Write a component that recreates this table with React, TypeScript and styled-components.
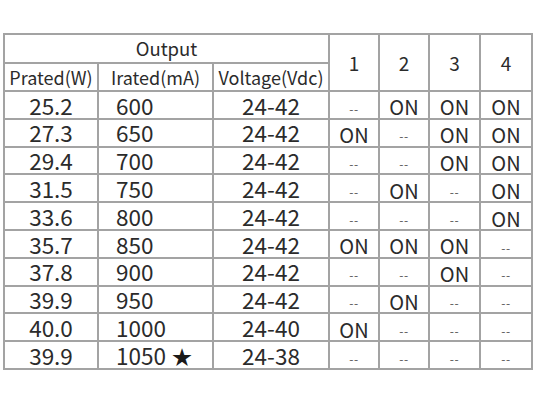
import styled, { createGlobalStyle } from "styled-components";

const GlobalStyle = createGlobalStyle`
  html, body {
    margin: 0;
    padding: 0;
    background: #ffffff;
  }
  body {
    font-family: "Noto Sans CJK SC", "Noto Sans", sans-serif;
    color: #2b2b2b;
  }
`;

const Page = styled.div`
  width: 536px;
  height: 404px;
  padding: 33px 0 0 3px;
  box-sizing: border-box;
`;

const Table = styled.table`
  border-collapse: collapse;
  table-layout: fixed;
  width: 528px;
  border: 2px solid #9c9c9c;
`;

const Cell = styled.td<{ $align?: "left" | "center"; $size?: number; $h?: number }>`
  border: 2px solid #a3a3a3;
  padding: 0;
  height: ${(p) => p.$h ?? 25.8}px;
  text-align: ${(p) => p.$align ?? "center"};
  padding-left: ${(p) => (p.$align === "left" ? "17px" : "0")};
  font-size: ${(p) => p.$size ?? 22.5}px;
  line-height: 1;
  white-space: nowrap;
  vertical-align: middle;
`;

const Dash = styled.span`
  display: inline-block;
  vertical-align: middle;
  font-size: 12px;
  line-height: 1;
  letter-spacing: 0.5px;
  color: #555;
`;

const On = styled.span`
  display: inline-block;
  vertical-align: middle;
  font-size: 20px;
  line-height: 1;
`;

const Star = styled.span`
  font-size: 20px;
  margin-left: 6px;
  color: #1a1a1a;
`;

type Row = [string, string, boolean, string, boolean[]];

const rows: Row[] = [
  ["25.2", "600", false, "24-42", [false, true, true, true]],
  ["27.3", "650", false, "24-42", [true, false, true, true]],
  ["29.4", "700", false, "24-42", [false, false, true, true]],
  ["31.5", "750", false, "24-42", [false, true, false, true]],
  ["33.6", "800", false, "24-42", [false, false, false, true]],
  ["35.7", "850", false, "24-42", [true, true, true, false]],
  ["37.8", "900", false, "24-42", [false, false, true, false]],
  ["39.9", "950", false, "24-42", [false, true, false, false]],
  ["40.0", "1000", false, "24-40", [true, false, false, false]],
  ["39.9", "1050", true, "24-38", [false, false, false, false]],
];

const widths = [94, 115, 116, 50, 50, 51, 52];

export default function App() {
  return (
    <Page>
      <GlobalStyle />
      <Table>
        <colgroup>
          {widths.map((w, i) => (
            <col key={i} style={{ width: w }} />
          ))}
        </colgroup>
        <tbody>
          <tr>
            <Cell colSpan={3} $size={18.5} $h={27}>
              Output
            </Cell>
            {["1", "2", "3", "4"].map((n) => (
              <Cell key={n} rowSpan={2} $size={19}>
                {n}
              </Cell>
            ))}
          </tr>
          <tr>
            <Cell $size={18} $h={26}>Prated(W)</Cell>
            <Cell $size={18} $h={26}>Irated(mA)</Cell>
            <Cell $size={18} $h={26}>Voltage(Vdc)</Cell>
          </tr>
          {rows.map(([p, i, star, v, sw], idx) => (
            <tr key={idx}>
              <Cell>{p}</Cell>
              <Cell $align="left">
                {i}
                {star && <Star>★</Star>}
              </Cell>
              <Cell>{v}</Cell>
              {sw.map((on, k) => (
                <Cell key={k}>{on ? <On>ON</On> : <Dash>--</Dash>}</Cell>
              ))}
            </tr>
          ))}
        </tbody>
      </Table>
    </Page>
  );
}
